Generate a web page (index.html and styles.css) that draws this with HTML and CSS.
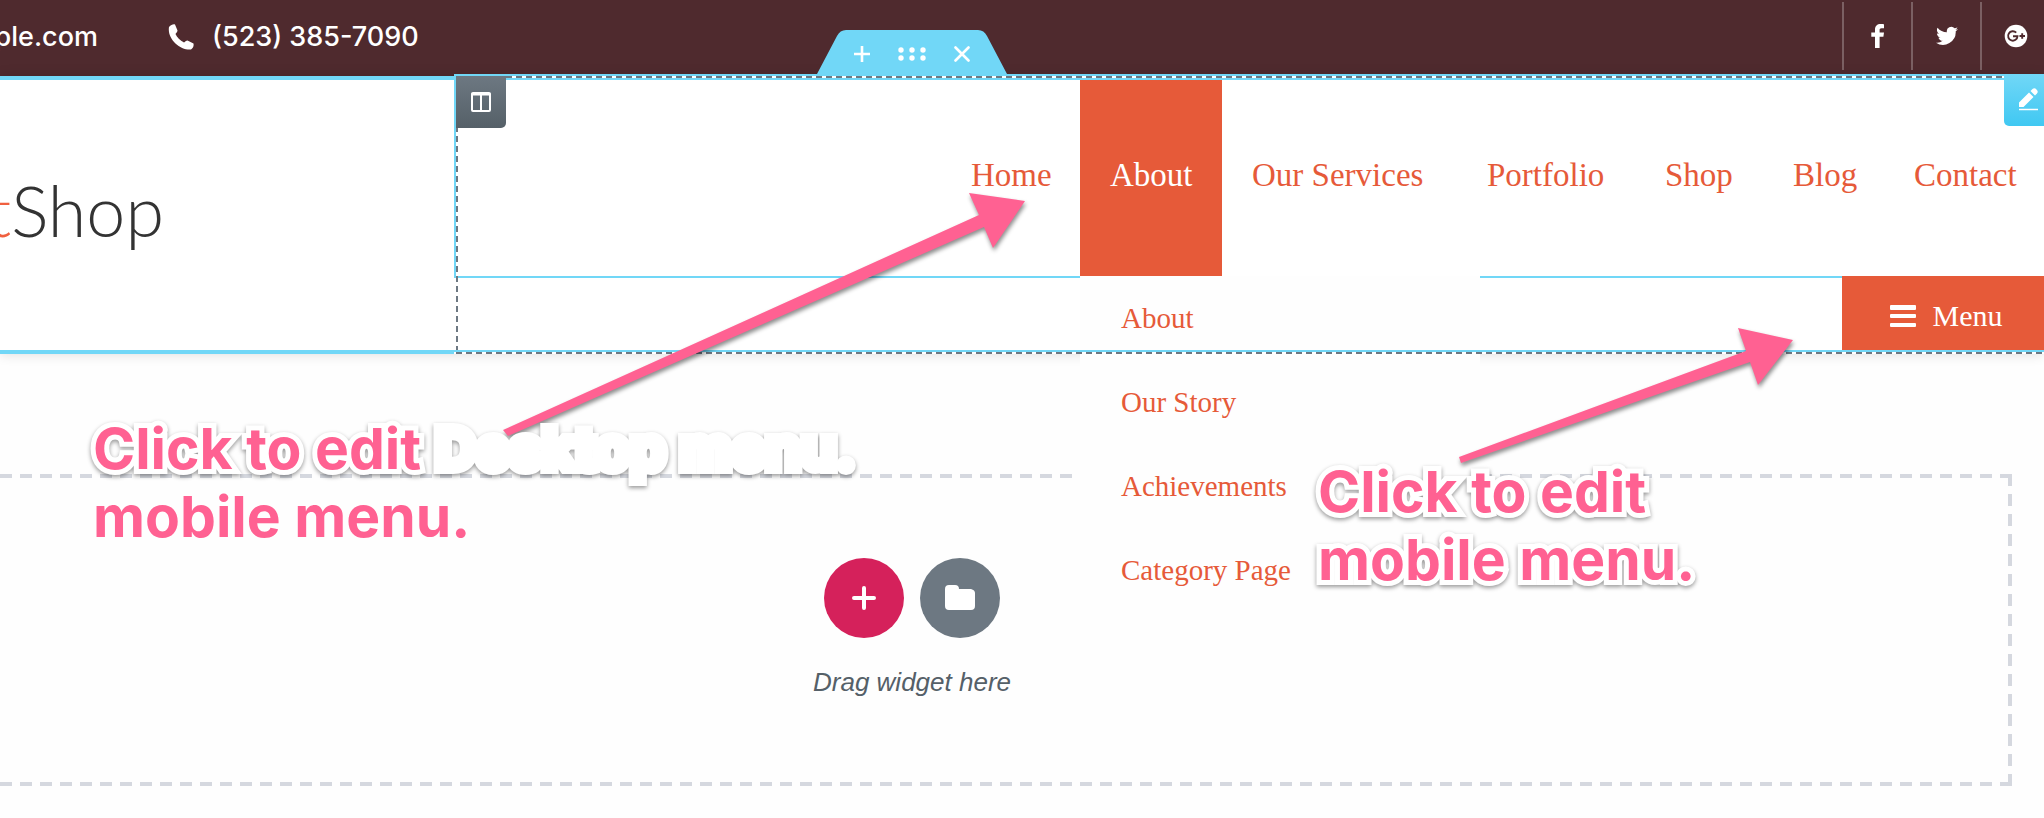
FILE: index.html
```html
<!DOCTYPE html>
<html lang="en">
<head>
<meta charset="utf-8">
<title>Header editor</title>
<link rel="stylesheet" href="styles.css">
</head>
<body>
<div class="page">
  <div class="topbar">
    <div class="contacts">
      <a class="email" href="#">ple.com</a>
      <a class="phone" href="#">
        <svg width="26" height="26" viewBox="0 0 26 26" aria-hidden="true"><path d="M1 3C3 1 5 0 7 0.500L9.500 6.500C9.500 8 8 9 7.500 10C9 13.500 12 16.500 16 18.500C17 18 18 16.500 19.500 16.500L25.500 19.500C26 22 25 24 23 25.500C12 26.500 -1 15 1 3Z" fill="#fff"/></svg>
        <span>(523) 385-7090</span>
      </a>
    </div>
    <nav class="social" aria-label="Social links">
      <a href="#" aria-label="Facebook"><svg width="14" height="24" viewBox="0 0 14 24"><path d="M13 .3v4h-2.500C9 4.300 8.600 5 8.600 6.200V8.600H13l-.6 4.100H8.600V24H4V12.700H.3V8.600H4V5.600C4 2 6.200 0 9.700 0 11.200 0 12.500.1 13 .3z" fill="#fff"/></svg></a>
      <a href="#" aria-label="Twitter"><svg width="22" height="20" viewBox="0 0 24 20"><path d="M24 2.300c-.9.400-1.800.7-2.800.8 1-.6 1.800-1.600 2.200-2.700-1 .6-2 1-3.100 1.200A4.900 4.900 0 0 0 11.900 6C7.800 5.900 4.200 3.900 1.700.9.400 3.100 1 6 3.200 7.500c-.8 0-1.600-.2-2.200-.6 0 2.300 1.600 4.400 3.900 4.900-.7.200-1.500.2-2.200.1.600 2 2.400 3.400 4.600 3.400A9.900 9.900 0 0 1 0 17.300a13.900 13.900 0 0 0 21.500-12.500c1-.7 1.800-1.500 2.500-2.500z" fill="#fff"/></svg></a>
      <a href="#" aria-label="Google Plus"><svg width="24" height="24" viewBox="0 0 24 24"><circle cx="12" cy="12" r="11.300" fill="#fff"/><path d="M12.200 8.700A4.700 4.700 0 1 0 13.500 12.200H9M15.500 12h5.500M18.200 9.300v5.400" fill="none" stroke="#4f2a2e" stroke-width="1.900"/></svg></a>
    </nav>
  </div>

  <header class="header">
    <div class="brand"><a class="logo" href="#"><span class="logo-accent">t</span>Shop</a></div>
    <div class="column">
      <button class="column-handle" aria-label="Edit column"><svg width="20" height="20" viewBox="0 0 20 20"><rect x="1" y="1" width="18" height="18" rx="1" fill="none" stroke="#fff" stroke-width="2"/><path d="M0 2.500h20M10 2v17" stroke="#fff" stroke-width="2"/></svg></button>
      <button class="widget-handle" aria-label="Edit widget"><svg width="20" height="24" viewBox="0 0 20 24"><path d="M0 14.500L10 4.500L14.500 9L4.500 19H0ZM11.500 3L13.500 1Q15.500-.6 17.500 1.400Q19.700 3.600 18 5.500L16 7.500Z" fill="#fff"/><path d="M0 21.500h19" stroke="#fff" stroke-width="1.500"/></svg></button>
      <nav class="desktop-nav" aria-label="Main menu">
        <ul class="menu">
          <li><a href="#">Home</a></li>
          <li class="active"><a href="#">About</a>
            <ul class="submenu">
              <li><a href="#">About</a></li>
              <li><a href="#">Our Story</a></li>
              <li><a href="#">Achievements</a></li>
              <li><a href="#">Category Page</a></li>
            </ul>
          </li>
          <li><a href="#">Our Services</a></li>
          <li><a href="#">Portfolio</a></li>
          <li><a href="#">Shop</a></li>
          <li><a href="#">Blog</a></li>
          <li><a href="#">Contact</a></li>
        </ul>
      </nav>
      <div class="mobile-nav">
        <button class="menu-toggle"><svg width="26" height="22" viewBox="0 0 26 22" aria-hidden="true"><g fill="#fff"><rect width="26" height="5" rx="1"/><rect y="9" width="26" height="4" rx="1"/><rect y="18" width="26" height="4" rx="1"/></g></svg><span>Menu</span></button>
      </div>
    </div>
    <div class="section-tab">
      <svg class="tab-shape" width="190" height="44" viewBox="0 0 190 44" aria-hidden="true"><path d="M0 44L20 6Q23 0 29 0H161Q167 0 170 6L190 44Z" fill="#71d7f7"/></svg>
      <button aria-label="Add section"><svg width="16" height="16" viewBox="0 0 16 16"><path d="M8 0v16M0 8h16" stroke="#fff" stroke-width="2.600"/></svg></button>
      <button aria-label="Move section"><svg width="28" height="14" viewBox="0 0 28 14"><g fill="#fff"><circle cx="3" cy="3" r="2.700"/><circle cx="14" cy="3" r="2.700"/><circle cx="25" cy="3" r="2.700"/><circle cx="3" cy="11" r="2.700"/><circle cx="14" cy="11" r="2.700"/><circle cx="25" cy="11" r="2.700"/></g></svg></button>
      <button aria-label="Remove section"><svg width="16" height="16" viewBox="0 0 16 16"><path d="M1.500 1.500l13 13M14.500 1.500l-13 13" stroke="#fff" stroke-width="2.600" stroke-linecap="round"/></svg></button>
    </div>
  </header>

  <main class="canvas">
    <section class="drop-zone">
      <div class="drop-actions">
        <button class="round add" aria-label="Add widget"><svg width="24" height="24" viewBox="0 0 24 24"><path d="M12 2v20M2 12h20" stroke="#fff" stroke-width="4" stroke-linecap="round"/></svg></button>
        <button class="round library" aria-label="Template library"><svg width="30" height="26" viewBox="0 0 30 26"><path d="M4 0H10Q14 0 14 4H26Q30 5 30 8V21Q30 25 26 25H4Q0 25 0 21V4Q0 0 4 0Z" fill="#fff"/></svg></button>
      </div>
      <p class="drop-text">Drag widget here</p>
    </section>
  </main>

  <svg class="arrows" width="2044" height="818" viewBox="0 0 2044 818" aria-hidden="true">
    <path d="M503 430L979 215L969 193L1025 201L993 248L984 227L508 436Z"/>
    <path d="M1459 457L1746 351L1738 328L1793 340L1758 385L1750 362L1461 463Z"/>
  </svg>
  <p class="note note-desktop"><span class="outlined">Click to edit</span> <span class="ghost">Desktop menu.</span><br>mobile menu.</p>
  <p class="note note-mobile outlined">Click to edit<br>mobile menu.</p>
</div>
</body>
</html>
```
FILE: styles.css
```css
* { box-sizing: border-box; }
body { margin: 0; background: #fefefe; font-family: Inter, "Liberation Sans", sans-serif; }
button { border: 0; padding: 0; margin: 0; background: none; font: inherit; cursor: pointer; display: flex; align-items: center; justify-content: center; }
a { color: inherit; text-decoration: none; }
ul { list-style: none; margin: 0; padding: 0; }
svg { display: block; flex: none; }

.page { position: relative; overflow: hidden; min-height: 100vh; }

.topbar { display: flex; justify-content: space-between; height: 76px; background: #4f2a2e; color: #fff; }
.contacts { display: flex; align-items: center; gap: 70px; font-size: 27px; font-weight: 500; line-height: 32px; padding-bottom: 2px; }
.email { display: flex; justify-content: flex-end; width: 98px; white-space: nowrap; }
.phone { display: flex; align-items: center; gap: 18px; }
.social { display: flex; padding: 2px 0 6px; }
.social a { display: flex; align-items: center; justify-content: center; width: 69px; border-left: 2px solid #7b6063; }
.social a:last-child { width: 64px; padding-left: 6px; }

.header { position: relative; display: flex; height: 278px; background: #fff; box-shadow: 0 0 12px rgba(0, 0, 0, .14); }
.brand { flex: 0 0 454px; display: flex; align-items: center; padding-bottom: 10px; border-top: 4px solid #71d7f7; border-bottom: 4px solid #71d7f7; }
.logo { display: flex; justify-content: flex-end; width: 164px; font: 300 70px/84px Lato, sans-serif; color: #333; }
.logo-accent { color: #f0603f; }

.column { position: relative; flex: 1; margin-top: -2px; display: flex; flex-direction: column; background: #fff; }
.column::after {
  content: ""; position: absolute; inset: 0; z-index: 2; pointer-events: none;
  background:
    linear-gradient(#71d7f7, #71d7f7) 0 0 / 100% 2px no-repeat,
    linear-gradient(#71d7f7, #71d7f7) 0 4px / 100% 2px no-repeat,
    linear-gradient(#71d7f7, #71d7f7) 0 276px / 100% 2px no-repeat,
    repeating-linear-gradient(90deg, #6d7882 0 6px, #fff 6px 10px) 2px 2px / 100% 2px no-repeat,
    repeating-linear-gradient(90deg, #6d7882 0 6px, #fff 6px 10px) 2px 278px / 100% 2px no-repeat,
    repeating-linear-gradient(180deg, #6d7882 0 6px, #fff 6px 10px) 2px 2px / 2px 100% no-repeat;
}
.column-handle { position: absolute; z-index: 3; left: 2px; top: 2px; width: 50px; height: 52px; background: linear-gradient(#6d7882, #556068); border-radius: 0 0 5px 0; }
.widget-handle { position: absolute; z-index: 3; right: 0; top: 0; width: 40px; height: 52px; padding-left: 10px; background: linear-gradient(#71d7f7, #40c8f2); border-radius: 0 0 0 5px; }

.desktop-nav { height: 204px; padding-top: 6px; border-left: 2px solid #71d7f7; border-bottom: 2px solid #71d7f7; font: 33px/40px "Liberation Serif", serif; color: #e65a39; }
.menu { display: grid; grid-template-columns: 139px 142px 235px 178px 128px 121px 160px; justify-content: end; height: 196px; }
.menu > li { position: relative; white-space: nowrap; }
.menu > li > a { display: flex; align-items: center; height: 100%; padding: 0 0 6px 30px; }
.active > a { background: #e65a39; color: #fff; }
.submenu { position: absolute; z-index: 1; top: 100%; left: 0; width: 400px; background: #fefefe; font-size: 29px; }
.submenu a { display: flex; align-items: center; height: 84px; padding-left: 41px; }

.mobile-nav { display: flex; justify-content: flex-end; height: 72px; }
.menu-toggle { width: 202px; height: 74px; margin-top: -2px; padding: 6px 0 0 6px; gap: 17px; background: #e65a39; color: #fff; font: 30px/36px "Liberation Serif", serif; }

.section-tab { position: absolute; z-index: 3; left: calc(50% - 205px); top: -46px; width: 190px; height: 44px; padding-top: 4px; display: flex; justify-content: center; }
.section-tab button { position: relative; width: 50px; }
.tab-shape { position: absolute; left: 0; top: 0; }

.canvas { padding: 120px 32px 32px 0; }
.drop-zone {
  margin-left: -188px; height: 312px; padding-top: 84px; display: flex; flex-direction: column; align-items: center; gap: 28px;
  background:
    repeating-linear-gradient(270deg, #d5d8df 0 12px, transparent 12px 20px) 0 0 / 100% 4px no-repeat,
    repeating-linear-gradient(270deg, #d5d8df 0 12px, transparent 12px 20px) 0 100% / 100% 4px no-repeat,
    repeating-linear-gradient(180deg, #d5d8df 0 12px, transparent 12px 20px) 100% 0 / 4px 100% no-repeat;
}
.drop-actions { display: flex; gap: 16px; }
.round { width: 80px; height: 80px; border-radius: 50%; }
.add { background: #d5215b; }
.library { background: #6d7882; }
.drop-text { margin: 0; font: italic 26px/32px "Liberation Sans", sans-serif; color: #556068; }

.arrows { position: absolute; z-index: 4; left: 0; top: 0; fill: #ff6192; filter: drop-shadow(1px 3px 2px rgba(0, 0, 0, .45)); }
.note { position: absolute; z-index: 5; margin: 0; font-size: 57px; font-weight: 700; line-height: 68px; color: #ff6192; white-space: nowrap; }
.note-desktop { left: 93px; top: 415px; }
.note-mobile { left: 1318px; top: 458px; }
.outlined { -webkit-text-stroke: 10px #fff; paint-order: stroke fill; stroke-linejoin: round; filter: drop-shadow(0 2px 2px rgba(0, 0, 0, .4)); }
.ghost { color: #fff; -webkit-text-stroke: 10px #fff; stroke-linejoin: round; filter: drop-shadow(0 2px 2px rgba(0, 0, 0, .4)); }
.note .outlined, .note .ghost { display: inline-block; }
```
